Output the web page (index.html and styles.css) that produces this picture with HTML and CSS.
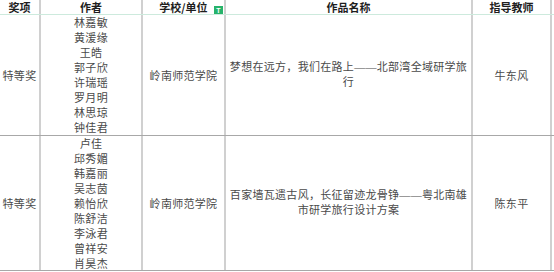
FILE: index.html
```html
<!DOCTYPE html>
<html lang="zh-CN">
<head>
<meta charset="utf-8">
<title>获奖名单</title>
<link rel="stylesheet" href="styles.css">
</head>
<body>
<div class="sheet">
  <div class="row head">
    <div class="cell">奖项</div>
    <div class="cell">作者</div>
    <div class="cell school-head">学校/单位<span class="badge">T</span></div>
    <div class="cell">作品名称</div>
    <div class="cell">指导教师</div>
  </div>
  <div class="row r1">
    <div class="cell">特等奖</div>
    <div class="cell names">
      <span>林嘉敏</span><span>黄湲缘</span><span>王皓</span><span>郭子欣</span><span>许瑞瑶</span><span>罗月明</span><span>林思琼</span><span>钟佳君</span>
    </div>
    <div class="cell">岭南师范学院</div>
    <div class="cell title">梦想在远方，我们在路上——北部湾全域研学旅行</div>
    <div class="cell">牛东风</div>
  </div>
  <div class="row r2">
    <div class="cell">特等奖</div>
    <div class="cell names">
      <span>卢佳</span><span>邱秀媚</span><span>韩嘉丽</span><span>吴志茵</span><span>赖怡欣</span><span>陈舒洁</span><span>李泳君</span><span>曾祥安</span><span>肖昊杰</span>
    </div>
    <div class="cell">岭南师范学院</div>
    <div class="cell title">百家墙瓦遗古风，长征留迹龙骨铮——粤北南雄市研学旅行设计方案</div>
    <div class="cell">陈东平</div>
  </div>
</div>
</body>
</html>
```

FILE: styles.css
```css
html, body {
  margin: 0;
  padding: 0;
  background: #ffffff;
}

.sheet {
  width: 554px;
  height: 272px;
  overflow: hidden;
  font-family: "Liberation Serif", "Noto Sans CJK SC", serif;
  font-size: 11px;
  color: #4a4a4a;
}

.row {
  display: grid;
  grid-template-columns: 41px 102px 83px 247px 79px;
}

.cell {
  border-right: 2px solid #d0d0d0;
  display: flex;
  align-items: center;
  justify-content: center;
  text-align: center;
  letter-spacing: 0.3px;
  overflow: hidden;
}

.head {
  height: 14px;
  border-bottom: 1px solid #cdeadd;
  font-family: "Noto Sans CJK SC", sans-serif;
  font-weight: 700;
  color: #1e1e1e;
}

.head .cell {
  line-height: 14px;
  letter-spacing: 0;
}

.school-head {
  position: relative;
}

.badge {
  position: absolute;
  right: 1px;
  top: 6px;
  width: 9px;
  height: 9px;
  background: #27b36b;
  color: #ffffff;
  font-size: 7px;
  line-height: 9px;
  font-weight: 700;
  font-family: "Liberation Sans", sans-serif;
  text-align: center;
}

.r1 {
  height: 120px;
  border-bottom: 1px solid #a8a8a8;
}

.r2 {
  height: 134px;
  border-bottom: 1px solid #a8a8a8;
}

.names {
  flex-direction: column;
  justify-content: flex-start;
  line-height: 15px;
  padding-top: 1px;
}

.title {
  line-height: 15px;
  padding: 0 2px;
}
```
